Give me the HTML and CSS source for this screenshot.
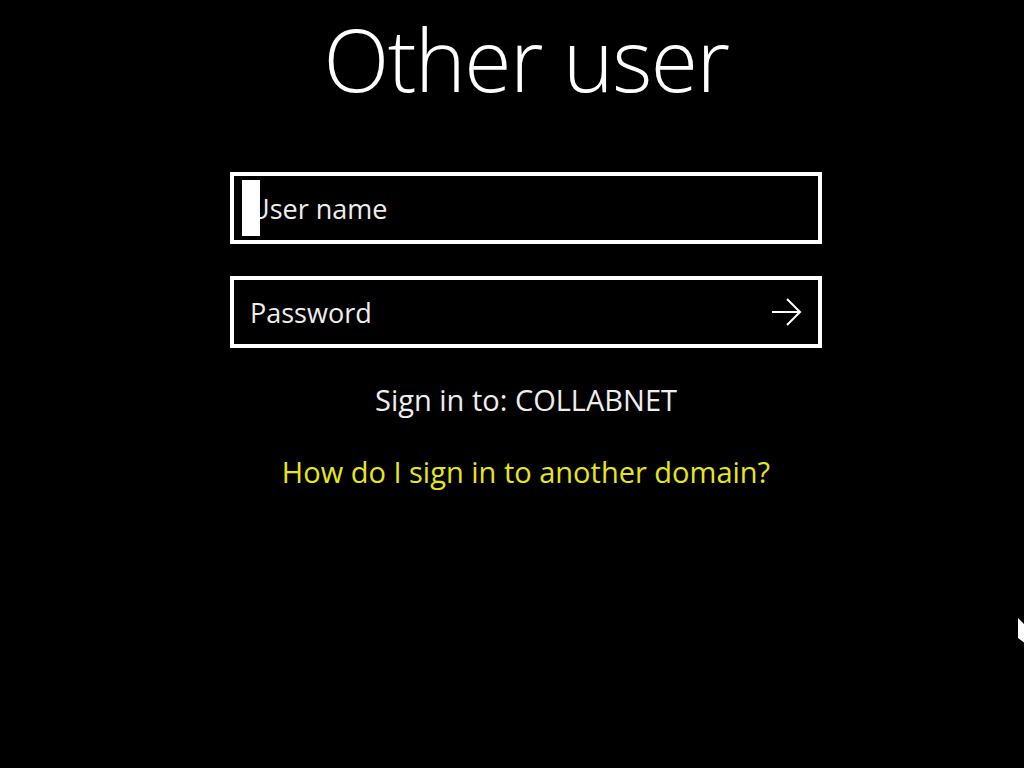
FILE: index.html
```html
<!DOCTYPE html>
<html lang="en">

<head>
  <meta charset="UTF-8" />
  <title>Other user</title>
  <link rel="stylesheet" href="styles.css">
</head>

<body>
  <div id="signin">
    <h1>Other user</h1>

    <div class="field">
      <span class="caret"></span>
      <span class="placeholder user">User name</span>
    </div>

    <div class="field">
      <span class="placeholder">Password</span>
      <svg class="arrow" width="32" height="30" viewBox="0 0 32 30">
        <path d="M1 15 H29 M16 2 L29 15 L16 28" fill="none" stroke="#fff" stroke-width="2" />
      </svg>
    </div>

    <div class="domain">Sign in to: COLLABNET</div>
    <a class="help" href="#">How do I sign in to another domain?</a>
  </div>

  <svg class="pointer" width="8" height="28" viewBox="0 0 8 28">
    <path d="M0 0 L8 8 L8 26 L0 20 Z" fill="#fff" />
  </svg>
</body>

</html>
```

FILE: styles.css
```css
* {
  box-sizing: border-box;
}

body {
  margin: 0;
  height: 100vh;
  background: #000;
  color: #fff;
  font-family: 'Open Sans', 'Noto Sans', sans-serif;
  overflow: hidden;
  position: relative;
}

#signin {
  width: 592px;
  margin-left: 230px;
  display: flex;
  flex-direction: column;
  align-items: center;
}

h1 {
  margin: 0;
  height: 172px;
  font-weight: 300;
  font-size: 86px;
  line-height: 118px;
  letter-spacing: -1.5px;
}

.field {
  width: 100%;
  height: 72px;
  border: 4px solid #fff;
  display: flex;
  align-items: center;
  padding: 0 16px;
  position: relative;
  margin-bottom: 32px;
}

.placeholder {
  font-size: 27px;
  color: #eee;
}

.caret {
  position: absolute;
  left: 8px;
  top: 4px;
  width: 18px;
  height: 56px;
  background: #fff;
}

.arrow {
  margin-left: auto;
  margin-right: -1px;
}

.domain {
  margin-top: 0;
  font-size: 29px;
  color: #eee;
}

.help {
  margin-top: 33px;
  font-size: 29px;
  color: #e6e619;
  text-decoration: none;
}

.pointer {
  position: absolute;
  left: 1018px;
  top: 618px;
}
```
